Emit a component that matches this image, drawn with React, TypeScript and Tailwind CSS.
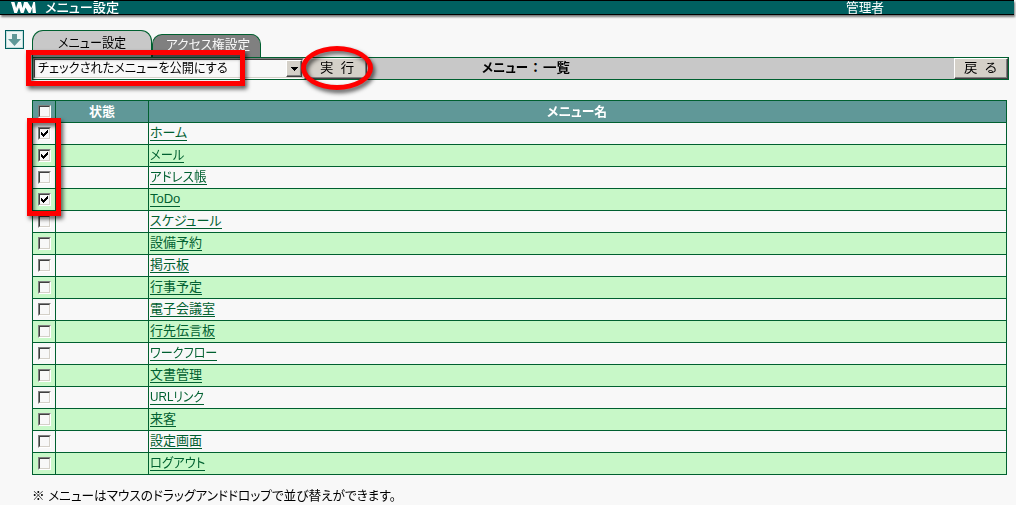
import { useLayoutEffect, useRef, useState } from "react";

type FitProps = { text: string; width: number; className?: string };

/* One line of text condensed or stretched to an exact width. */
function Fit({ text, width, className = "" }: FitProps) {
  const ref = useRef<HTMLSpanElement>(null);
  const [scale, setScale] = useState(1);
  useLayoutEffect(() => {
    if (ref.current) setScale(width / ref.current.offsetWidth);
  }, [text, width]);
  return (
    <span className={`inline-block shrink-0 text-left whitespace-nowrap ${className}`} style={{ width }}>
      <span
        ref={ref}
        className="inline-block origin-left whitespace-nowrap [font-feature-settings:'palt']"
        style={{ transform: `scaleX(${scale})` }}
      >
        {text}
      </span>
    </span>
  );
}

function Checkbox({ checked = false }: { checked?: boolean }) {
  return (
    <span className="block h-[13px] w-[13px] border border-t-[#808080] border-r-white border-b-white border-l-[#808080]">
      <span className="block h-[11px] w-[11px] border border-t-[#404040] border-r-[#d4d0c8] border-b-[#d4d0c8] border-l-[#404040] bg-[#f8f8f8]">
        {checked && (
          <svg className="block" width="9" height="9" viewBox="0 0 9 9" shapeRendering="crispEdges">
            <path d="M1 3h1v1h1v1h1v-1h1v-1h1v-1h1v-1h1v3h-1v1h-1v1h-1v1h-1v1h-1v-1h-1v-1h-1z" fill="#000" />
          </svg>
        )}
      </span>
    </span>
  );
}

const rows = [
  { name: "ホーム", width: 37, checked: true },
  { name: "メール", width: 34, checked: true },
  { name: "アドレス帳", width: 57 },
  { name: "ToDo", width: 30, checked: true },
  { name: "スケジュール", width: 72 },
  { name: "設備予約", width: 52 },
  { name: "掲示板", width: 39 },
  { name: "行事予定", width: 52 },
  { name: "電子会議室", width: 65 },
  { name: "行先伝言板", width: 65 },
  { name: "ワークフロー", width: 67 },
  { name: "文書管理", width: 52 },
  { name: "URLリンク", width: 54 },
  { name: "来客", width: 26 },
  { name: "設定画面", width: 52 },
  { name: "ログアウト", width: 55 },
];

const raised = "border border-t-white border-l-white border-r-[#404040] border-b-[#404040] bg-[#d4d0c8] shadow-[inset_-1px_-1px_0_#808080]";

export default function App() {
  return (
    <div className="relative h-[505px] w-[1016px] overflow-hidden bg-[#f8f8f8] font-['Liberation_Sans','Noto_Sans_CJK_JP',sans-serif] text-[13px] leading-[14px] text-black">
      <header className="flex h-[15px] w-[1014px] items-start border-y border-black bg-[#006060] leading-[13px] text-white shadow-[1px_2px_2px_#777]">
        <svg className="ml-[11px]" width="25" height="13" viewBox="0 0 25 13">
          <path d="M0 1h3.5l1.6 6L7 1h3l1.6 6L13 1h3.5l4 6 1.8-6H24l1 11h-3.4l-.3-5.5-1.8 5.5h-1.8L14.500 6.500 12.600 12h-2.800L8 6.500 6 12H3.300z" fill="#fff" />
        </svg>
        <Fit text="メニュー設定" width={74} className="ml-[9px] h-[13px] font-medium" />
        <Fit text="管理者" width={38} className="ml-[727px] h-[13px]" />
      </header>

      <div className="flex h-[42px] pt-[15px] pl-[5px]">
        <div className="flex h-[19px] w-[19px] items-center justify-center border border-[#006060] bg-[#eef6f6] shadow-[inset_0_0_0_1px_#c4dddd]">
          <svg width="13" height="12" viewBox="0 0 13 12">
            <path d="M4 0h5v5h4L6.5 12 0 5h4z" fill="#609898" />
          </svg>
        </div>
        <div className="ml-2 flex items-end">
          <div className="flex h-[27px] w-[120px] justify-center rounded-t-[11px] border border-b-0 border-[#006030] bg-[#c8c8c8] pt-[5px]">
            <Fit text="メニュー設定" width={68} />
          </div>
          <div className="flex h-[23px] w-[109px] justify-center rounded-t-[10px] border border-b-0 border-[#006030] bg-[#808080] pt-[3px] pl-[2px] text-[#f8f8f8]">
            <Fit text="アクセス権設定" width={84} />
          </div>
        </div>
      </div>

      <div className="ml-8 flex h-[23px] w-[977px] border border-[#006030] bg-[#c8c8c8]">
        <div className="flex h-[21px] w-[271px] border border-t-[#808080] border-r-white border-b-white border-l-[#808080] bg-[#f8f8f8]">
          <div className="flex flex-1 border border-t-[#404040] border-r-[#d4d0c8] border-b-[#d4d0c8] border-l-[#404040]">
            <Fit text="チェックされたメニューを公開にする" width={190} className="ml-[3px] pt-px" />
            <span className={`ml-auto flex h-[17px] w-[16px] items-center justify-center ${raised}`}>
              <svg width="7" height="4" viewBox="0 0 7 4" shapeRendering="crispEdges">
                <path d="M0 0h7v1h-1v1h-1v1h-1v1h-1v-1h-1v-1h-1v-1h-1z" />
              </svg>
            </span>
          </div>
        </div>
        <button className={`flex h-[21px] w-[63px] items-start justify-center pt-[2px] ${raised}`}>
          <Fit text="実 &nbsp;行" width={34} className="ml-[2px]" />
        </button>
        <div className="flex w-[203px] pt-[3px] pl-[115px] font-bold">
          <Fit text="メニュー" width={46} />
          <span className="w-[15px] text-center">：</span>
          <Fit text="一覧" width={27} />
        </div>
        <button className={`ml-auto flex h-[21px] w-[54px] items-start justify-center pt-[2px] ${raised}`}>
          <Fit text="戻 &nbsp;る" width={33} className="-ml-px" />
        </button>
      </div>

      <div className="mt-5 ml-8 w-[975px] border border-b-0 border-[#006030]">
        <div className="grid h-[22px] grid-cols-[23px_93px_857px] border-b border-[#006030] bg-[#609898] font-bold text-white">
          <div className="border-r border-[#006030] pt-1 pl-[5px]">
            <Checkbox />
          </div>
          <div className="flex justify-center border-r border-[#006030] pt-1">
            <Fit text="状態" width={26} />
          </div>
          <div className="flex justify-center pt-1 pr-[2px]">
            <Fit text="メニュー名" width={60} />
          </div>
        </div>
        {rows.map((row) => (
          <div
            key={row.name}
            className="grid h-[22px] grid-cols-[23px_93px_857px] border-b border-[#006030] text-[#006030] even:bg-[#f8f8f8] odd:bg-[#c8f8c8]"
          >
            <div className="border-r border-[#006030] pt-1 pl-[5px]">
              <Checkbox checked={row.checked} />
            </div>
            <div className="border-r border-[#006030]" />
            <div className="pt-[3px] pl-px">
              <a className="flex h-[15px] w-fit border-b border-[#006030]">
                <Fit text={row.name} width={row.width} />
              </a>
            </div>
          </div>
        ))}
      </div>

      <div className="mt-[14px] ml-8">
        <Fit text="※ メニューはマウスのドラッグアンドドロップで並び替えができます。" width={364} />
      </div>

      <div className="pointer-events-none absolute top-[50px] left-[26px] h-[36px] w-[219px] border-[5px] border-[#ff0000] drop-shadow-[2px_3px_2px_rgba(0,0,0,0.65)]" />
      <div className="pointer-events-none absolute top-[118px] left-[27px] h-[98px] w-[34px] border-[5px] border-[#ff0000] drop-shadow-[2px_3px_2px_rgba(0,0,0,0.65)]" />
      <div className="pointer-events-none absolute top-[46px] left-[301px] h-[44px] w-[72px] rounded-[50%] border-[5px] border-[#ff0000] drop-shadow-[2px_3px_2px_rgba(0,0,0,0.65)]" />
    </div>
  );
}
